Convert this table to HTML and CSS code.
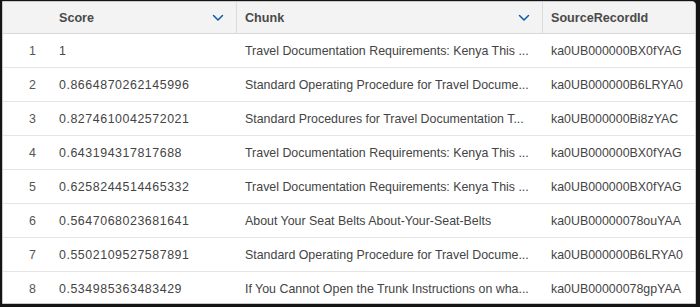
FILE: index.html
```html
<!DOCTYPE html>
<html>
<head>
<meta charset="utf-8">
<link rel="stylesheet" href="styles.css">
</head>
<body>
<div class="frame">
  <div class="table">
    <div class="row head">
      <div class="cell num"></div>
      <div class="cell score hcell"><span>Score</span><svg class="chev" viewBox="0 0 12 8" width="12" height="8"><path d="M1.5 1.5 L6 6 L10.5 1.5" fill="none" stroke="#0b5cab" stroke-width="1.5" stroke-linecap="round" stroke-linejoin="round"/></svg></div>
      <div class="cell chunk hcell"><span>Chunk</span><svg class="chev" viewBox="0 0 12 8" width="12" height="8"><path d="M1.5 1.5 L6 6 L10.5 1.5" fill="none" stroke="#0b5cab" stroke-width="1.5" stroke-linecap="round" stroke-linejoin="round"/></svg></div>
      <div class="cell src hcell"><span>SourceRecordId</span></div>
    </div>
    <div class="row"><div class="cell num">1</div><div class="cell score">1</div><div class="cell chunk">Travel Documentation Requirements: Kenya This ...</div><div class="cell src">ka0UB000000BX0fYAG</div></div>
    <div class="row"><div class="cell num">2</div><div class="cell score">0.8664870262145996</div><div class="cell chunk">Standard Operating Procedure for Travel Docume...</div><div class="cell src">ka0UB000000B6LRYA0</div></div>
    <div class="row"><div class="cell num">3</div><div class="cell score">0.8274610042572021</div><div class="cell chunk">Standard Procedures for Travel Documentation T...</div><div class="cell src">ka0UB000000Bi8zYAC</div></div>
    <div class="row"><div class="cell num">4</div><div class="cell score">0.643194317817688</div><div class="cell chunk">Travel Documentation Requirements: Kenya This ...</div><div class="cell src">ka0UB000000BX0fYAG</div></div>
    <div class="row"><div class="cell num">5</div><div class="cell score">0.6258244514465332</div><div class="cell chunk">Travel Documentation Requirements: Kenya This ...</div><div class="cell src">ka0UB000000BX0fYAG</div></div>
    <div class="row"><div class="cell num">6</div><div class="cell score">0.5647068023681641</div><div class="cell chunk">About Your Seat Belts About-Your-Seat-Belts</div><div class="cell src">ka0UB00000078ouYAA</div></div>
    <div class="row"><div class="cell num">7</div><div class="cell score">0.5502109527587891</div><div class="cell chunk">Standard Operating Procedure for Travel Docume...</div><div class="cell src">ka0UB000000B6LRYA0</div></div>
    <div class="row"><div class="cell num">8</div><div class="cell score">0.534985363483429</div><div class="cell chunk">If You Cannot Open the Trunk Instructions on wha...</div><div class="cell src">ka0UB00000078gpYAA</div></div>
  </div>
</div>
</body>
</html>
```
FILE: styles.css
```css
html, body {
  margin: 0;
  padding: 0;
  background: #141414;
  width: 700px;
  height: 307px;
  overflow: hidden;
}
.frame {
  box-sizing: border-box;
  margin: 1px 4px 0 2px;
  height: 303px;
  background: #fff;
  border: 1px solid #c9c9c9;
  border-radius: 0 4px 0 0;
  overflow: hidden;
}
.table {
  font-family: "Liberation Sans", Arial, sans-serif;
  font-size: 12.4px;
  color: #444;
}
.row {
  display: grid;
  grid-template-columns: 48px 186px 306px 1fr;
  height: 34px;
  border-bottom: 1px solid #e5e5e5;
  box-sizing: border-box;
}
.row.head {
  height: 32px;
  background: #f3f3f3;
  border-bottom: 1px solid #d8d8d8;
  font-weight: bold;
  color: #4a4a4a;
  font-size: 12.6px;
}
.cell {
  display: flex;
  align-items: center;
  padding: 0 8px;
  white-space: nowrap;
  overflow: hidden;
}
.cell.num {
  justify-content: flex-end;
  padding: 0 15px 0 0;
  color: #555;
}
.row .cell.score {
  letter-spacing: 0.55px;
}
.row.head .cell.score {
  letter-spacing: 0;
}
.hcell {
  justify-content: space-between;
  border-right: 1px solid #dcdcdc;
}
.hcell.src {
  border-right: none;
}
.chev {
  margin-right: 4px;
}
```
